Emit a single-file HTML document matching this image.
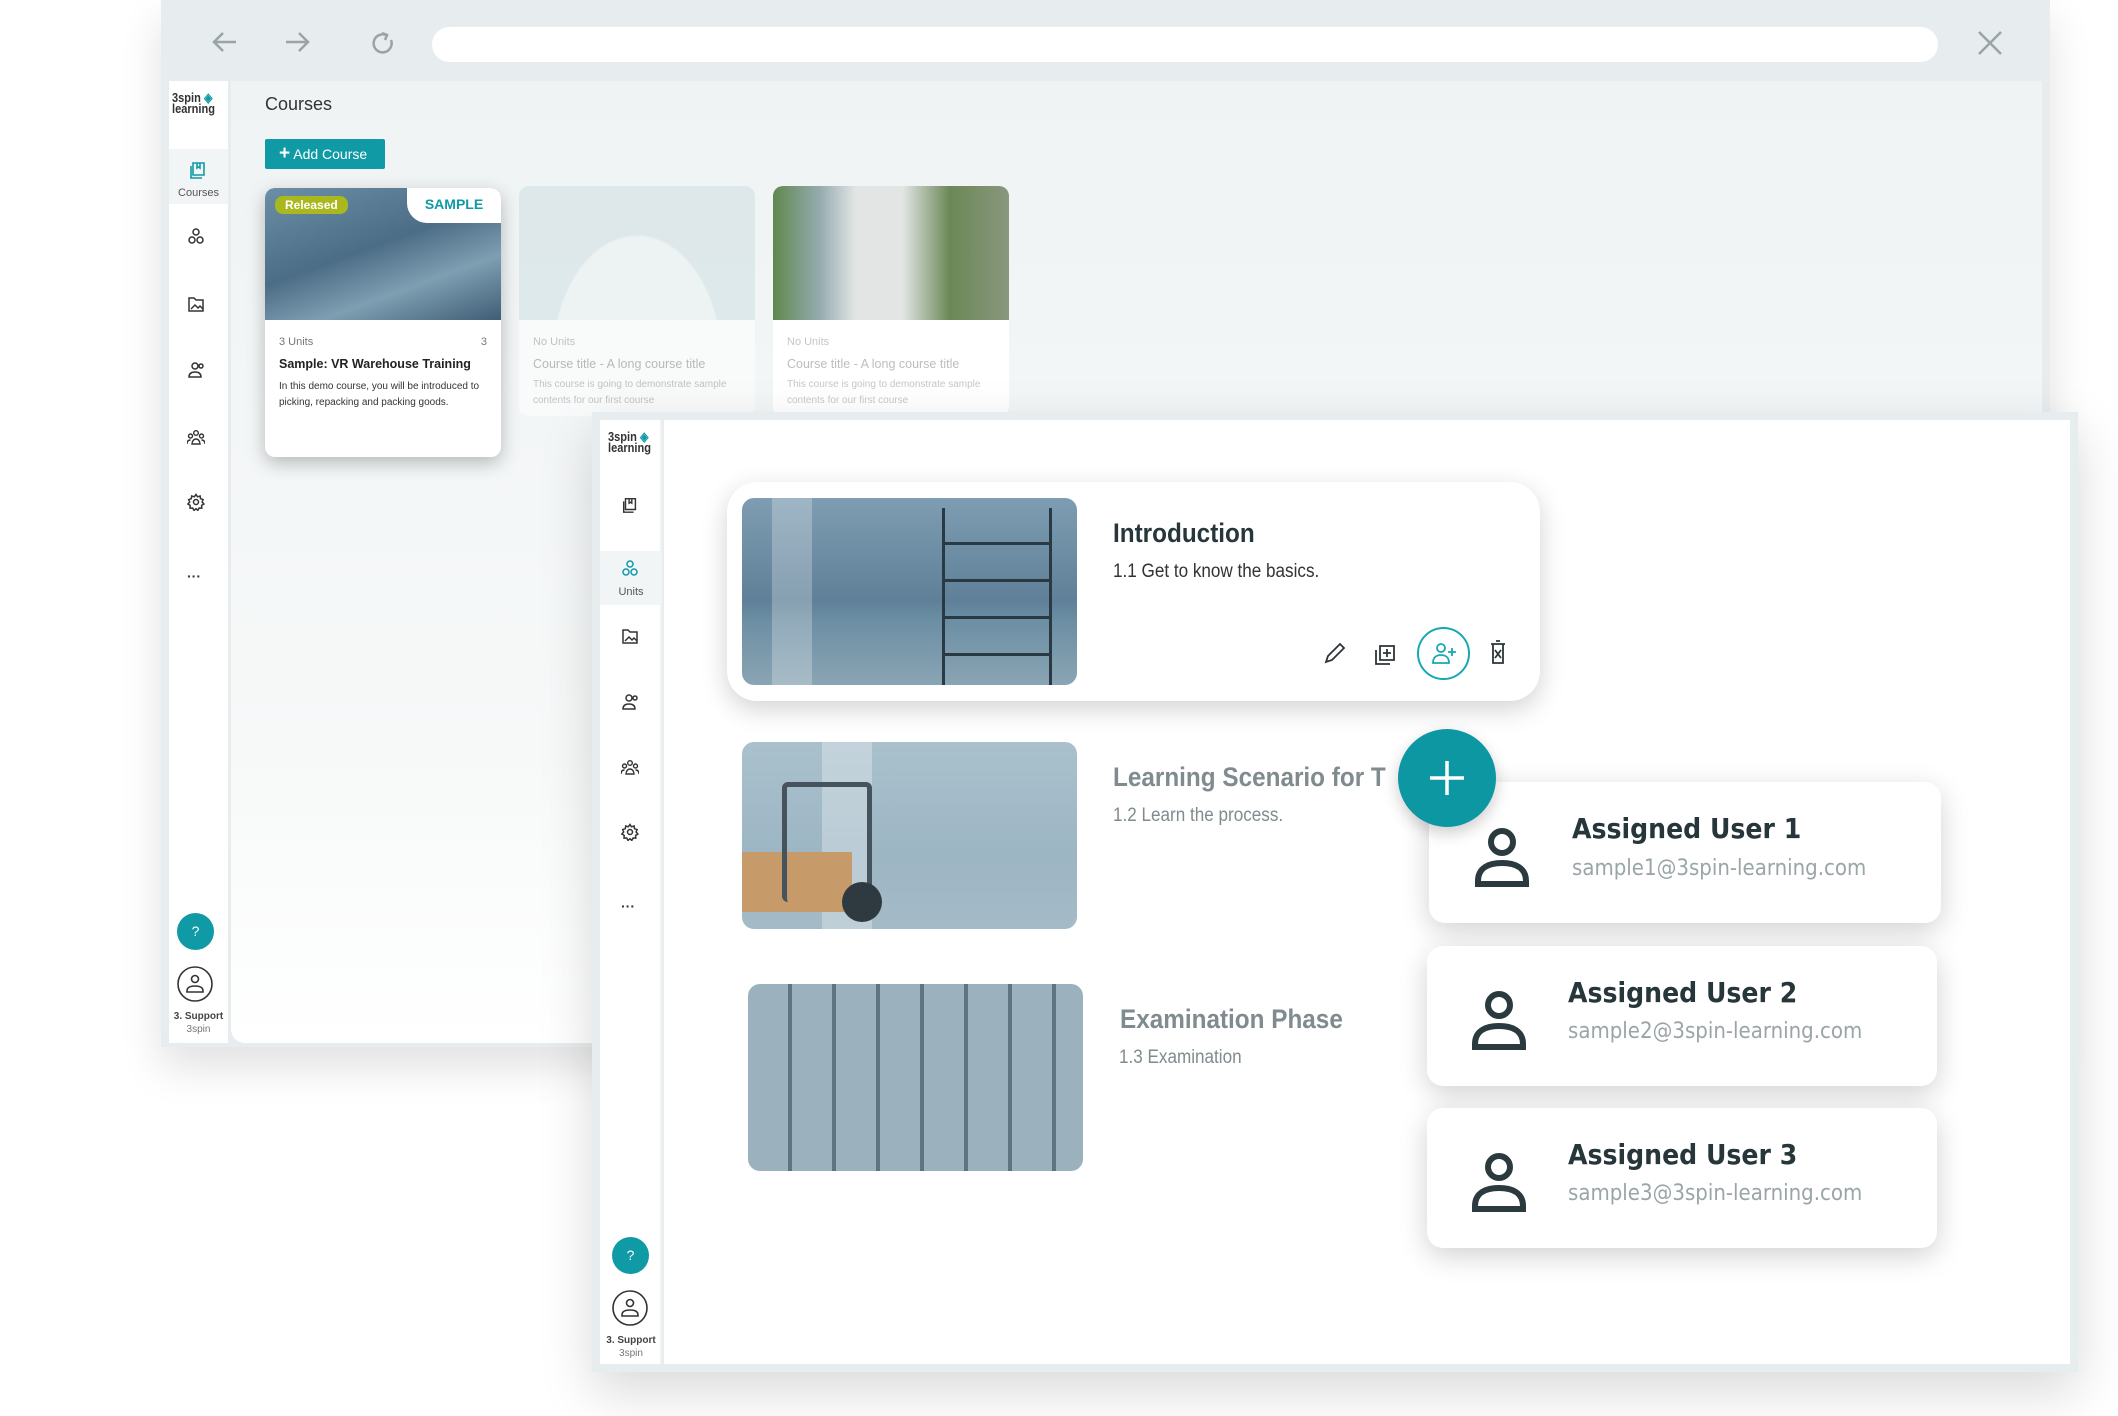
<!DOCTYPE html>
<html><head><meta charset="utf-8">
<style>
*{margin:0;padding:0;box-sizing:border-box}
body{width:2118px;height:1416px;background:#fff;position:relative;overflow:hidden;font-family:"Liberation Sans Narrow","Liberation Sans",sans-serif;color:#2b3538}
.abs{position:absolute}
.win1{left:161px;top:0;width:1889px;height:1047px;background:#e7ecee;box-shadow:0 20px 40px rgba(0,0,0,.12)}
.url{left:432px;top:27px;width:1506px;height:35px;background:#fff;border-radius:18px}
.side1{left:169px;top:81px;width:59px;height:962px;background:#fff}
.cont1{left:231px;top:81px;width:1811px;height:962px;background:linear-gradient(#eff3f4,#f7f9f9 70%,#fff);border-radius:0 0 0 14px}
.card{background:#fff;border-radius:10px;overflow:hidden}
.win2{left:592px;top:412px;width:1486px;height:960px;background:#e7ecee;box-shadow:0 20px 50px rgba(0,0,0,.15)}
.side2{left:600px;top:420px;width:62px;height:944px;background:#fff;border-right:2px solid #eef2f3}
.cont2{left:664px;top:420px;width:1406px;height:944px;background:#fff}
.ucard{background:#fff;border-radius:16px;box-shadow:0 8px 28px rgba(0,0,0,.18)}
.ut{font-family:"DejaVu Sans Condensed","DejaVu Sans",sans-serif;font-weight:bold;font-size:28px;color:#27363a}
.ue{font-family:"DejaVu Sans Condensed","DejaVu Sans",sans-serif;font-size:22px;color:#9aa5a8}
.rt{font-size:27px;font-weight:bold;transform:scaleX(.9);transform-origin:0 0;white-space:nowrap}
.rs{font-size:19px;transform:scaleX(.9);transform-origin:0 0;white-space:nowrap}
</style></head><body>
<svg width="0" height="0" style="position:absolute"><defs>
<g id="units" fill="none" stroke-width="1.5"><circle cx="9" cy="4" r="3"/><circle cx="5" cy="12" r="3"/><circle cx="13" cy="12" r="3"/></g>
<g id="img" fill="none" stroke-width="1.5"><path d="M2 3h5l2 2h7v11H2z"/><path d="M4 14l4-4 3 3 2-2 3 3"/></g>
<g id="usr" fill="none" stroke-width="1.5"><circle cx="7" cy="5" r="3"/><path d="M1 16c0-4 3-5 6-5s6 1 6 5z"/><circle cx="13" cy="5" r="2"/></g>
<g id="grp" fill="none" stroke-width="1.4"><circle cx="9" cy="5" r="2.3"/><circle cx="3.5" cy="8" r="2"/><circle cx="14.5" cy="8" r="2"/><path d="M5 16c0-3 2-5 4-5s4 2 4 5zM0 16c0-3 1.5-4 3.5-4M18 16c0-3-1.5-4-3.5-4"/></g>
<g id="gear" fill="none" stroke-width="1.5"><circle cx="9" cy="9" r="2.5"/><path d="M9 1.5l1.5 2.3 2.6-.8.4 2.7 2.6.9-1 2.4 1.8 2-2.3 1.4.2 2.7-2.7-.1-1.3 2.4L9 15.7l-2 1.7-1.3-2.4-2.7.1.2-2.7L.9 11l1.8-2-1-2.4 2.6-.9.4-2.7 2.6.8z"/></g>
<g id="prof" fill="none" stroke-width="1.6"><circle cx="18" cy="18" r="17"/><circle cx="18" cy="13" r="3.5"/><path d="M10 25c0-4 4-5 8-5s8 1 8 5v1H10z"/></g>
</defs></svg>

<div class="abs win1"></div>
<svg class="abs" style="left:212px;top:30px" width="420" height="30" viewBox="0 0 420 30"><g stroke="#9aa3a6" stroke-width="2.5" fill="none"><path d="M2 12h22M11 3L2 12l9 9"/><path d="M74 12h22M87 3l9 9-9 9"/><path d="M174 5a9 9 0 1 0 5 5"/><path d="M170 3l5 2-2 5"/></g></svg>
<div class="abs url"></div>
<svg class="abs" style="left:1978px;top:31px" width="24" height="24"><path d="M1 1l22 22M23 1L1 23" stroke="#9aa3a6" stroke-width="2.5"/></svg>
<div class="abs side1"></div>
<div class="abs cont1"></div>
<div class="abs" style="left:172px;top:92px;font-size:13px;line-height:11px;font-weight:bold;color:#333;transform:scaleX(.85);transform-origin:0 0">3spin <span style="color:#0f9aa6">◈</span><br>learning</div>
<div class="abs" style="left:169px;top:149px;width:59px;height:55px;background:#f2f5f6"></div>
<svg class="abs" style="left:188px;top:160px" width="20" height="20" viewBox="0 0 20 20"><path d="M5 3h11v12H5zM3 6v12h11M9 3v5l1.5-1 1.5 1V3" stroke="#0f9aa6" stroke-width="1.6" fill="none"/></svg>
<div class="abs" style="left:169px;top:187px;width:59px;text-align:center;font-size:11px;color:#555">Courses</div>
<svg class="abs" style="left:187px;top:228px" width="18" height="18" stroke="#333"><use href="#units"/></svg>
<svg class="abs" style="left:187px;top:295px" width="18" height="18" stroke="#333"><use href="#img"/></svg>
<svg class="abs" style="left:188px;top:361px" width="18" height="18" stroke="#333"><use href="#usr"/></svg>
<svg class="abs" style="left:187px;top:428px" width="18" height="18" stroke="#333"><use href="#grp"/></svg>
<svg class="abs" style="left:187px;top:493px" width="18" height="18" stroke="#333"><use href="#gear"/></svg>
<div class="abs" style="left:187px;top:568px;font-size:14px;font-weight:bold;color:#333">···</div>
<div class="abs" style="left:177px;top:913px;width:37px;height:37px;border-radius:50%;background:#0f9aa6;color:#fff;text-align:center;line-height:37px;font-size:14px">?</div>
<svg class="abs" style="left:177px;top:966px" width="37" height="37" stroke="#333"><use href="#prof"/></svg>
<div class="abs" style="left:169px;top:1010px;width:59px;text-align:center;font-size:10px;font-weight:bold;color:#444;line-height:13px">3. Support<br><span style="font-weight:normal;color:#777">3spin</span></div>

<div class="abs" style="left:265px;top:94px;font-size:18px;color:#333">Courses</div>
<div class="abs" style="left:265px;top:139px;width:120px;height:30px;background:#0f9aa6;border-radius:2px;color:#fff;font-size:14px;line-height:30px;padding-left:14px"><b style="font-size:19px">+</b> Add Course</div>

<div class="abs card" style="left:265px;top:188px;width:236px;height:269px;box-shadow:0 6px 18px rgba(0,0,0,.25)">
 <div style="height:132px;background:linear-gradient(160deg,#6c8ea6,#4c6d86 45%,#7e9eb2 70%,#3f5e76)"></div>
 <div class="abs" style="left:10px;top:8px;background:#a9b81e;color:#fff;font-size:12px;font-weight:bold;padding:2px 10px;border-radius:8px">Released</div>
 <div class="abs" style="right:0;top:0;width:94px;height:35px;background:#fff;border-radius:0 0 0 20px;color:#0f9aa6;font-weight:bold;font-size:14px;text-align:center;line-height:32px">SAMPLE</div>
 <div style="padding:16px 14px 0;font-size:11px;color:#777;display:flex;justify-content:space-between"><span>3 Units</span><span>3</span></div>
 <div style="padding:9px 14px 0;font-size:12.5px;font-weight:bold;color:#222">Sample: VR Warehouse Training</div>
 <div style="padding:8px 14px 0;font-size:10px;line-height:16px;color:#333">In this demo course, you will be introduced to picking, repacking and packing goods.</div>
</div>
<div class="abs card" style="left:519px;top:186px;width:236px;height:230px;opacity:.55">
 <div style="height:134px;background:radial-gradient(ellipse at 50% 130%,#eaf1f2 50%,#cfe0e3 51%)"></div>
 <div style="padding:16px 14px 0;font-size:11px;color:#999">No Units</div>
 <div style="padding:9px 14px 0;font-size:12.5px;color:#888">Course title - A long course title</div>
 <div style="padding:6px 14px 0;font-size:10px;line-height:16px;color:#999">This course is going to demonstrate sample contents for our first course</div>
</div>
<div class="abs card" style="left:773px;top:186px;width:236px;height:230px">
 <div style="height:134px;background:linear-gradient(90deg,#4e7a3a,#8aa3a8 20%,#dfe2e0 35%,#dfe2e0 55%,#5b7a44 75%,#7c8c70);opacity:.9"></div>
 <div style="background:#fff;opacity:.55;height:96px">
 <div style="padding:16px 14px 0;font-size:11px;color:#999">No Units</div>
 <div style="padding:9px 14px 0;font-size:12.5px;color:#888">Course title - A long course title</div>
 <div style="padding:6px 14px 0;font-size:10px;line-height:16px;color:#999">This course is going to demonstrate sample contents for our first course</div></div>
</div>

<div class="abs win2"></div>
<div class="abs side2"></div>
<div class="abs cont2"></div>
<div class="abs" style="left:608px;top:431px;font-size:13px;line-height:11px;font-weight:bold;color:#333;transform:scaleX(.85);transform-origin:0 0">3spin <span style="color:#0f9aa6">◈</span><br>learning</div>
<svg class="abs" style="left:621px;top:496px" width="18" height="18" viewBox="0 0 20 20"><path d="M5 3h11v12H5zM3 6v12h11M9 3v5l1.5-1 1.5 1V3" stroke="#333" stroke-width="1.6" fill="none"/></svg>
<div class="abs" style="left:600px;top:551px;width:62px;height:54px;background:#f2f5f6"></div>
<svg class="abs" style="left:621px;top:560px" width="18" height="18" stroke="#0f9aa6"><use href="#units"/></svg>
<div class="abs" style="left:600px;top:586px;width:62px;text-align:center;font-size:11px;color:#555">Units</div>
<svg class="abs" style="left:621px;top:627px" width="18" height="18" stroke="#333"><use href="#img"/></svg>
<svg class="abs" style="left:622px;top:693px" width="18" height="18" stroke="#333"><use href="#usr"/></svg>
<svg class="abs" style="left:621px;top:758px" width="18" height="18" stroke="#333"><use href="#grp"/></svg>
<svg class="abs" style="left:621px;top:823px" width="18" height="18" stroke="#333"><use href="#gear"/></svg>
<div class="abs" style="left:621px;top:898px;font-size:14px;font-weight:bold;color:#333">···</div>
<div class="abs" style="left:612px;top:1237px;width:37px;height:37px;border-radius:50%;background:#0f9aa6;color:#fff;text-align:center;line-height:37px;font-size:14px">?</div>
<svg class="abs" style="left:612px;top:1290px" width="37" height="37" stroke="#333"><use href="#prof"/></svg>
<div class="abs" style="left:600px;top:1334px;width:62px;text-align:center;font-size:10px;font-weight:bold;color:#444;line-height:13px">3. Support<br><span style="font-weight:normal;color:#777">3spin</span></div>

<div class="abs" style="left:727px;top:482px;width:813px;height:219px;background:#fff;border-radius:30px;box-shadow:0 8px 26px rgba(0,0,0,.18)"></div>
<div class="abs" style="left:742px;top:498px;width:335px;height:187px;border-radius:12px;background:linear-gradient(180deg,#7e9db2,#5f8098 55%,#6c8ea3 65%,#8aa5b4);overflow:hidden"><div class="abs" style="left:30px;top:0;width:40px;height:187px;background:rgba(255,255,255,.25)"></div><div class="abs" style="left:200px;top:10px;width:110px;height:187px;border:3px solid #2a3a44;border-width:0 3px;background:repeating-linear-gradient(#0000 0 34px,#2a3a44 34px 37px)"></div></div>
<div class="abs rt" style="left:1113px;top:518px;color:#27363a">Introduction</div>
<div class="abs rs" style="left:1113px;top:561px;color:#333">1.1 Get to know the basics.</div>
<svg class="abs" style="left:1320px;top:636px" width="200" height="34" viewBox="0 0 200 34"><g stroke="#2b3538" stroke-width="1.8" fill="none"><path d="M6 26l2-6 12-12 4 4-12 12z"/><path d="M60 10h14v14H60zM56 14v14h14M67 13v8M63 17h8"/><path d="M173 8v19h10V8M171 8h14M176 5h4M175 14l6 8M181 14l-6 8"/></g></svg>
<div class="abs" style="left:1417px;top:627px;width:53px;height:53px;border:2px solid #17a8b4;border-radius:50%"></div>
<svg class="abs" style="left:1430px;top:640px" width="28" height="28" viewBox="0 0 28 28"><g stroke="#17a8b4" stroke-width="1.8" fill="none"><circle cx="11" cy="8" r="4"/><path d="M3 23c0-6 4-8 8-8s8 2 8 8z"/><path d="M22 8v8M18 12h8"/></g></svg>

<div class="abs" style="left:742px;top:742px;width:335px;height:187px;border-radius:12px;background:linear-gradient(180deg,#aac0cd,#9db6c4 60%,#a4bac7);overflow:hidden"><div class="abs" style="left:80px;top:0;width:50px;height:187px;background:rgba(255,255,255,.3)"></div><div class="abs" style="left:0;top:110px;width:110px;height:60px;background:#c79a6a"></div><div class="abs" style="left:40px;top:40px;width:90px;height:120px;border:5px solid #44535c;border-radius:6px;border-bottom:none"></div><div class="abs" style="left:100px;top:140px;width:40px;height:40px;border-radius:50%;background:#2f3a40"></div></div>
<div class="abs rt" style="left:1113px;top:762px;color:#7f8b8e">Learning Scenario for T</div>
<div class="abs rs" style="left:1113px;top:805px;color:#7f8b8e">1.2 Learn the process.</div>

<div class="abs" style="left:748px;top:984px;width:335px;height:187px;border-radius:12px;background:repeating-linear-gradient(90deg,#9bb1be 0 40px,#5f7380 40px 44px),#9bb1be"></div>
<div class="abs rt" style="left:1120px;top:1004px;color:#7f8b8e">Examination Phase</div>
<div class="abs rs" style="left:1119px;top:1047px;color:#7f8b8e">1.3 Examination</div>

<div class="abs ucard" style="left:1429px;top:782px;width:512px;height:141px"></div>
<div class="abs ucard" style="left:1427px;top:946px;width:510px;height:140px"></div>
<div class="abs ucard" style="left:1427px;top:1108px;width:510px;height:140px"></div>
<svg class="abs" style="left:1470px;top:795px" width="60" height="460" viewBox="0 0 60 460"><g stroke="#2b3a3e" stroke-width="6" fill="none"><circle cx="32" cy="47" r="11"/><path d="M8 86c0-14 12-18 24-18s24 4 24 18v3H8z"/><circle cx="29" cy="210" r="11"/><path d="M5 249c0-14 12-18 24-18s24 4 24 18v3H5z"/><circle cx="29" cy="372" r="11"/><path d="M5 411c0-14 12-18 24-18s24 4 24 18v3H5z"/></g></svg>
<div class="abs ut" style="left:1572px;top:812px">Assigned User 1</div>
<div class="abs ue" style="left:1572px;top:856px">sample1@3spin-learning.com</div>
<div class="abs ut" style="left:1568px;top:976px">Assigned User 2</div>
<div class="abs ue" style="left:1568px;top:1019px">sample2@3spin-learning.com</div>
<div class="abs ut" style="left:1568px;top:1138px">Assigned User 3</div>
<div class="abs ue" style="left:1568px;top:1181px">sample3@3spin-learning.com</div>
<div class="abs" style="left:1398px;top:729px;width:98px;height:98px;border-radius:50%;background:#0d97a3;box-shadow:0 6px 16px rgba(0,0,0,.2)"></div>
<svg class="abs" style="left:1428px;top:759px" width="38" height="38"><path d="M19 2v34M2 19h34" stroke="#fff" stroke-width="3.5"/></svg>
</body></html>
